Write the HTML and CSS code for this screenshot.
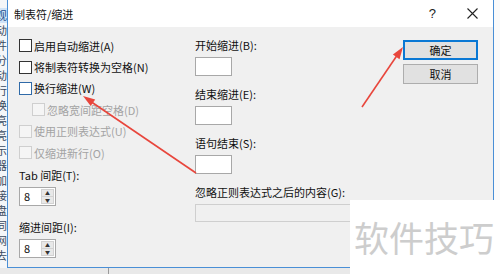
FILE: index.html
```html
<!DOCTYPE html>
<html>
<head>
  <title>制表符/缩进</title>
  <link rel="stylesheet" href="styles.css">
</head>
<body>
<div class="screen">
  <div class="side">
    <span class="sel">观</span><span>动</span><span>件</span><span>分</span><span>动</span><span>行</span><span>换</span><span>亮</span><span>亮</span><span>示</span><span>器</span><span>加</span><span>接</span><span>盘</span><span>同</span><span>网</span><span>去</span>
  </div>

  <div class="dialog">
    <div class="titlebar">
      <span class="title">制表符/缩进</span>
      <span class="help">?</span>
      <svg class="close" width="11" height="11" viewBox="0 0 11 11"><path d="M0.5 0.5 L10.5 10.5 M10.5 0.5 L0.5 10.5" stroke="#222" stroke-width="1.1"/></svg>
    </div>

    <div class="body">
      <div class="col-left">
        <div class="check"><span class="box"></span>启用自动缩进(A)</div>
        <div class="check"><span class="box"></span>将制表符转换为空格(N)</div>
        <div class="check"><span class="box hover"></span>换行缩进(W)</div>
        <div class="check sub off"><span class="box"></span>忽略宽间距空格(D)</div>
        <div class="check off"><span class="box"></span>使用正则表达式(U)</div>
        <div class="check off"><span class="box"></span>仅缩进新行(O)</div>

        <div class="label first">Tab 间距(T):</div>
        <div class="spin">
          <span class="val">8</span>
          <span class="arrows"><span class="up">▲</span><span class="down">▼</span></span>
        </div>
        <div class="label">缩进间距(I):</div>
        <div class="spin">
          <span class="val">8</span>
          <span class="arrows"><span class="up">▲</span><span class="down">▼</span></span>
        </div>
      </div>

      <div class="col-mid">
        <div class="field">
          <div class="label">开始缩进(B):</div>
          <div class="input"></div>
        </div>
        <div class="field">
          <div class="label">结束缩进(E):</div>
          <div class="input"></div>
        </div>
        <div class="field">
          <div class="label">语句结束(S):</div>
          <div class="input"></div>
        </div>
        <div class="field">
          <div class="label">忽略正则表达式之后的内容(G):</div>
          <div class="input wide"></div>
        </div>
      </div>

      <div class="col-btn">
        <div class="btn primary">确定</div>
        <div class="btn">取消</div>
      </div>
    </div>
  </div>
</div>
<div class="bottom"><span class="edge"></span></div>

<svg class="arrows-layer" width="500" height="274" viewBox="0 0 500 274">
  <line x1="196" y1="173" x2="90" y2="101" stroke="#e8463c" stroke-width="1.6"/>
  <polygon points="83,96 95.2,99.5 90.7,106.1" fill="#e8463c"/>
  <line x1="362" y1="107" x2="398" y2="54" stroke="#e8463c" stroke-width="1.6"/>
  <polygon points="403,47 399.5,59.2 392.9,54.6" fill="#e8463c"/>
</svg>

<div class="watermark">软件技巧</div>
</body>
</html>
```

FILE: styles.css
```css
body { margin: 0; width: 500px; height: 274px; overflow: hidden; background: #fafafa; position: relative;
  font-family: "Noto Sans CJK SC", "Microsoft YaHei", sans-serif; font-size: 11px; color: #111; }

.screen { display: flex; height: 268px; }
.side { width: 7px; overflow: hidden; display: flex; flex-direction: column; align-items: flex-end;
  padding-top: 8px; background: #f4f6f8; }
.side span { font-size: 11px; line-height: 15px; height: 15px; color: #3a4a60; white-space: nowrap; }
.side .sel { background: #cfe3f7; color: #1a4f8c; }

.dialog { width: 485px; border: 1px solid #4a8fd6; border-top: none; background: #f0f0f0; display: flex; flex-direction: column; }
.titlebar { height: 27px; background: #fff; display: flex; align-items: center; padding-left: 6px; }
.title { flex: 1; font-size: 11px; color: #111; }
.help { font-size: 13px; color: #222; margin-right: 31px; font-family: "Liberation Sans", sans-serif; }
.close { margin-right: 15px; }

.body { display: grid; grid-template-columns: 176px 208px 75px; padding: 8px 0 0 11px; align-items: start; }

.check { height: 21.4px; display: flex; align-items: center; gap: 1px; white-space: nowrap; }
.box { width: 11px; height: 11px; border: 1px solid #333; background: #fff; margin-right: 1px; }
.box.hover { border-color: #2f6aa8; }
.check.sub { padding-left: 13px; }
.check.off { color: #a3a3a3; }
.check.off .box { border-color: #cfcfcf; background: #f5f5f5; }

.label { height: 14px; line-height: 14px; white-space: nowrap; }
.col-left .label.first { margin-top: 5px; }
.col-left .label { margin-top: 14px; }
.spin { margin-top: 5px; width: 35px; height: 17px; border: 1px solid #a8a8a8; background: #fff; display: flex; justify-content: space-between; }
.spin .val { padding-left: 4px; line-height: 17px; font-size: 11px; }
.spin .arrows { width: 13px; margin: 1px 1px 1px 0; display: flex; flex-direction: column; }
.spin .arrows span { flex: 1; background: #e8e8e8; border: 1px solid #d2d2d2; font-size: 5px; line-height: 5px;
  text-align: center; color: #333; }
.spin .arrows .down { border-top: none; }

.col-mid { padding-top: 3px; }
.field { height: 49px; }
.field .input { margin-top: 5px; width: 35px; height: 17px; border: 1px solid #a8a8a8; background: #fff; }
.field .input.wide { width: 290px; height: 16px; border-color: #cfcfcf; background: #f0f0f0; }

.col-btn { padding-top: 5px; display: flex; flex-direction: column; gap: 4px; }
.btn { height: 18px; border: 1px solid #adadad; background: #e1e1e1; text-align: center; line-height: 18px; font-size: 11px; }
.btn.primary { border: 2px solid #0a78d4; height: 16px; line-height: 16px; }

.bottom { height: 6px; background: #e9e9e9; position: relative; }
.bottom .edge { position: absolute; left: 108px; top: 0; width: 1px; height: 6px; background: #9a9a9a; }

.arrows-layer { position: absolute; left: 0; top: 0; pointer-events: none; }
.watermark { position: absolute; left: 350px; top: 200px; width: 150px; height: 74px; background: #fff;
  font-size: 35px; line-height: 74px; color: #cdcdcd; padding-left: 4px; box-sizing: border-box; letter-spacing: 0; white-space: nowrap; }
```
